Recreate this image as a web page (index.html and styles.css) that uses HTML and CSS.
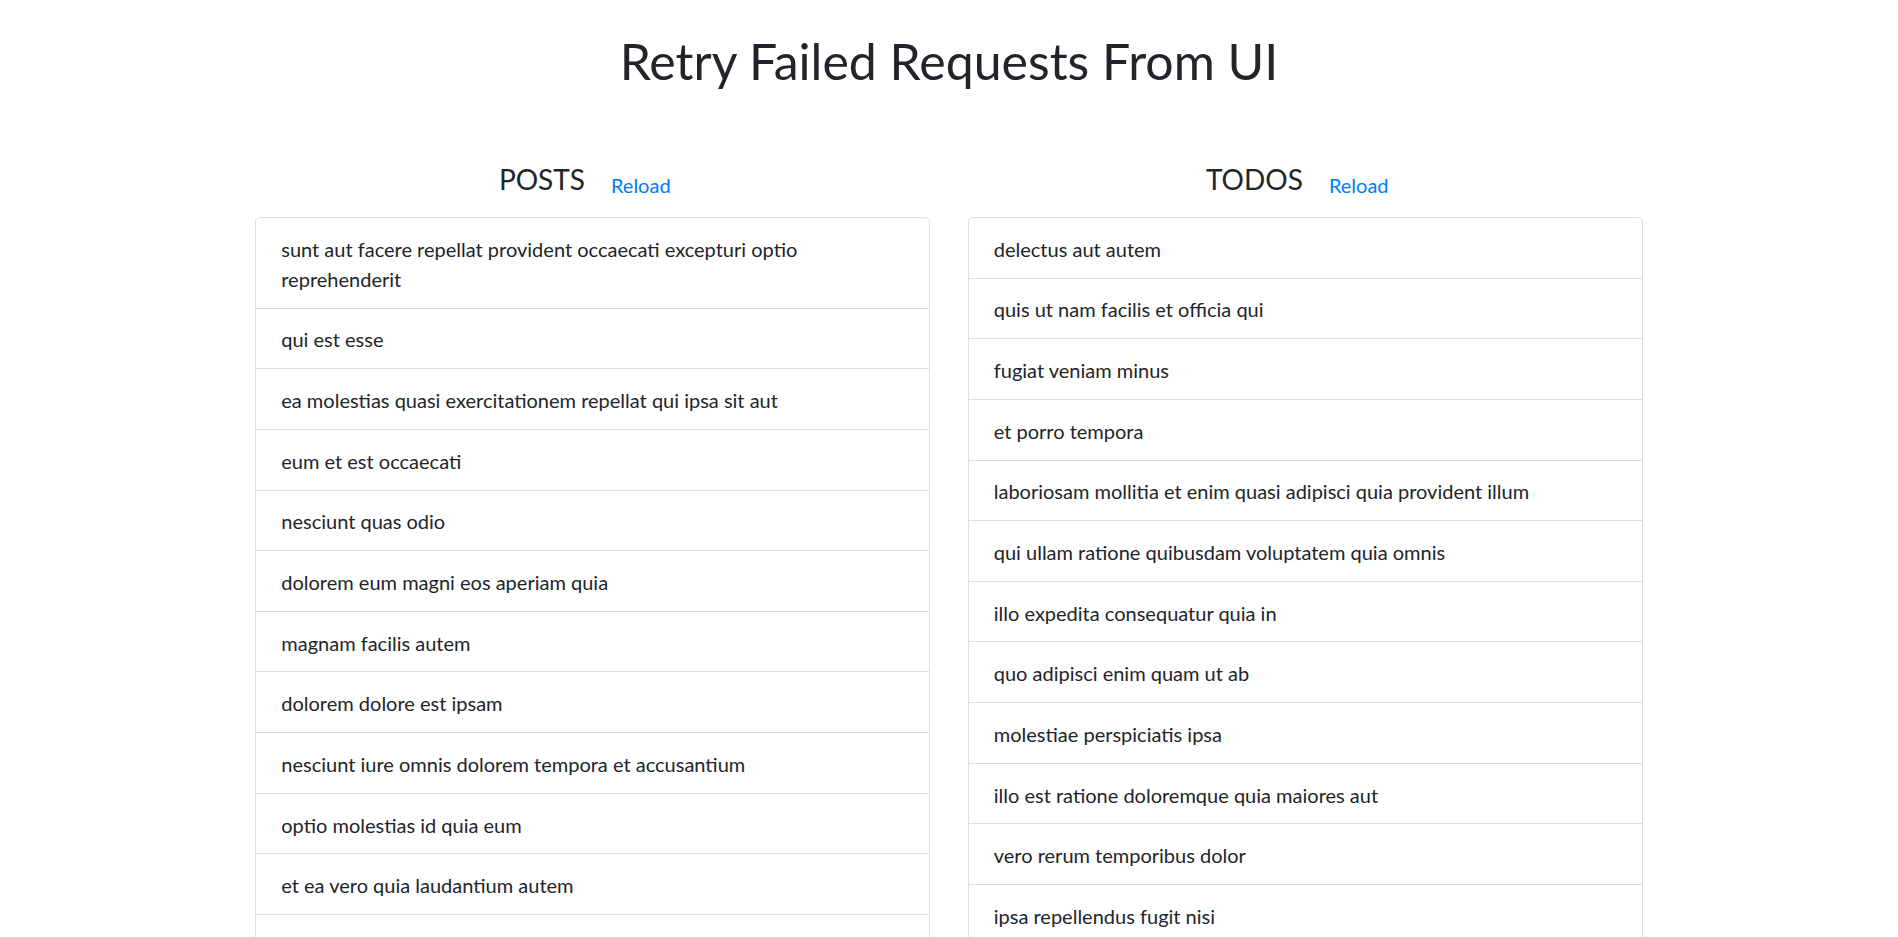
FILE: index.html
```html
<!DOCTYPE html>
<html lang="en">
<head>
<meta charset="utf-8">
<title>Retry Failed Requests From UI</title>
<link rel="stylesheet" href="styles.css">
</head>
<body>
<div class="container">
  <h1 class="title">Retry Failed Requests From UI</h1>
  <div class="row">
    <div class="col">
      <div class="col-head">
        <h4 class="col-title">POSTS</h4>
        <button class="btn-link" type="button">Reload</button>
      </div>
      <ul class="list">
        <li class="list-item">sunt aut facere repellat provident occaecati excepturi optio reprehenderit</li>
        <li class="list-item">qui est esse</li>
        <li class="list-item">ea molestias quasi exercitationem repellat qui ipsa sit aut</li>
        <li class="list-item">eum et est occaecati</li>
        <li class="list-item">nesciunt quas odio</li>
        <li class="list-item">dolorem eum magni eos aperiam quia</li>
        <li class="list-item">magnam facilis autem</li>
        <li class="list-item">dolorem dolore est ipsam</li>
        <li class="list-item">nesciunt iure omnis dolorem tempora et accusantium</li>
        <li class="list-item">optio molestias id quia eum</li>
        <li class="list-item">et ea vero quia laudantium autem</li>
        <li class="list-item">in quibusdam tempore odit est dolorem</li>
        <li class="list-item">dolorum ut in voluptas mollitia et saepe quo animi</li>
        <li class="list-item">voluptatem eligendi optio</li>
      </ul>
    </div>
    <div class="col">
      <div class="col-head">
        <h4 class="col-title">TODOS</h4>
        <button class="btn-link" type="button">Reload</button>
      </div>
      <ul class="list">
        <li class="list-item">delectus aut autem</li>
        <li class="list-item">quis ut nam facilis et officia qui</li>
        <li class="list-item">fugiat veniam minus</li>
        <li class="list-item">et porro tempora</li>
        <li class="list-item">laboriosam mollitia et enim quasi adipisci quia provident illum</li>
        <li class="list-item">qui ullam ratione quibusdam voluptatem quia omnis</li>
        <li class="list-item">illo expedita consequatur quia in</li>
        <li class="list-item">quo adipisci enim quam ut ab</li>
        <li class="list-item">molestiae perspiciatis ipsa</li>
        <li class="list-item">illo est ratione doloremque quia maiores aut</li>
        <li class="list-item">vero rerum temporibus dolor</li>
        <li class="list-item">ipsa repellendus fugit nisi</li>
        <li class="list-item">et doloremque nulla</li>
        <li class="list-item">repellendus sunt dolores architecto voluptatum</li>
      </ul>
    </div>
  </div>
</div>
</body>
</html>
```

FILE: styles.css
```css
html {
  scrollbar-width: none;
}
html::-webkit-scrollbar {
  display: none;
}
body {
  margin: 0;
  font-family: Lato, "Liberation Sans", sans-serif;
  font-size: 20px;
  line-height: 1.5;
  color: #212529;
  background: #fff;
}
.container {
  max-width: 1425px;
  margin: 0 auto;
  padding: 0 18.75px;
  box-sizing: border-box;
}
.title {
  margin: 31px 0 0;
  font-size: 50px;
  font-weight: 400;
  line-height: 60px;
  text-align: center;
}
.row {
  display: flex;
  gap: 37.5px;
  margin-top: 69px;
}
.col {
  flex: 1 1 0;
  min-width: 0;
}
.col-head {
  display: flex;
  justify-content: center;
  align-items: center;
  height: 47px;
  margin-bottom: 10px;
}
.col-title {
  margin: 0 10px 10px 0;
  font-size: 28px;
  font-weight: 400;
  line-height: 36px;
}
.btn-link {
  font-family: inherit;
  font-size: 20px;
  line-height: 30px;
  padding: 7.5px 15px;
  margin: 2px 0 0;
  border: 1px solid transparent;
  background: transparent;
  color: #007bff;
  cursor: pointer;
}
.list {
  list-style: none;
  margin: 0;
  padding: 0;
  border: 1px solid #dfdfdf;
  border-radius: 5px;
}
.list-item {
  padding: 15.8px 25px 13.85px;
  border-top: 1px solid #dfdfdf;
}
.list-item:first-child {
  border-top: 0;
}
```
